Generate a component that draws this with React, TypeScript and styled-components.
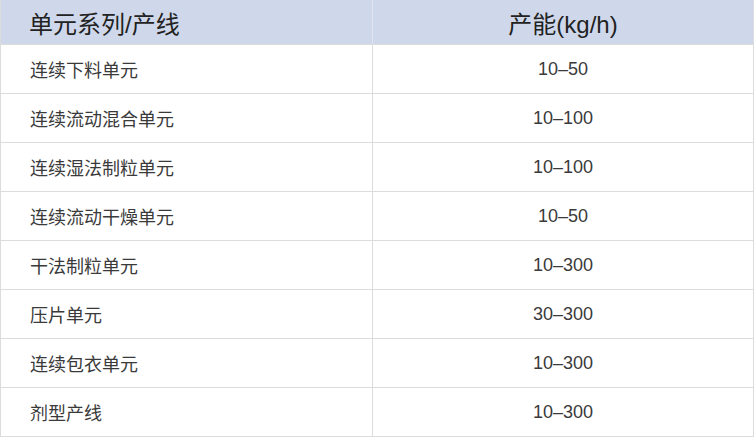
import { Fragment } from 'react';
import styled, { createGlobalStyle } from 'styled-components';

const GlobalStyle = createGlobalStyle`
  html, body {
    margin: 0;
    padding: 0;
    background: #ffffff;
  }
  body {
    font-family: "Liberation Sans", "Noto Sans CJK SC", sans-serif;
    color: #333333;
  }
`;

const Table = styled.div`
  width: 754px;
  box-sizing: border-box;
  border-left: 1px solid #dcdcdc;
  border-right: 1px solid #dcdcdc;
  display: grid;
  grid-template-columns: 371px 1fr;
`;

const HeadCell = styled.div<{ $center?: boolean }>`
  height: 44px;
  background: #cfd8eb;
  display: flex;
  align-items: center;
  justify-content: ${(p) => (p.$center ? 'center' : 'flex-start')};
  padding-left: ${(p) => (p.$center ? '0' : '28px')};
  font-size: 24px;
  color: #222222;
  border-left: ${(p) => (p.$center ? '1px solid #dfe4ee' : 'none')};
`;

const Cell = styled.div<{ $center?: boolean }>`
  box-sizing: border-box;
  height: 49px;
  border-top: 1px solid #dcdcdc;
  display: flex;
  align-items: center;
  justify-content: ${(p) => (p.$center ? 'center' : 'flex-start')};
  padding-left: ${(p) => (p.$center ? '0' : '29px')};
  font-size: 18px;
  color: #3a3a3a;
  border-left: ${(p) => (p.$center ? '1px solid #dcdcdc' : 'none')};
`;

const Bottom = styled.div`
  grid-column: 1 / -1;
  border-top: 1px solid #dcdcdc;
`;

const rows: [string, string][] = [
  ['连续下料单元', '10–50'],
  ['连续流动混合单元', '10–100'],
  ['连续湿法制粒单元', '10–100'],
  ['连续流动干燥单元', '10–50'],
  ['干法制粒单元', '10–300'],
  ['压片单元', '30–300'],
  ['连续包衣单元', '10–300'],
  ['剂型产线', '10–300'],
];

export default function App() {
  return (
    <>
      <GlobalStyle />
      <Table>
        <HeadCell>单元系列/产线</HeadCell>
        <HeadCell $center>产能(kg/h)</HeadCell>
        {rows.map(([name, cap]) => (
          <Fragment key={name}>
            <Cell>{name}</Cell>
            <Cell $center>{cap}</Cell>
          </Fragment>
        ))}
        <Bottom />
      </Table>
    </>
  );
}
